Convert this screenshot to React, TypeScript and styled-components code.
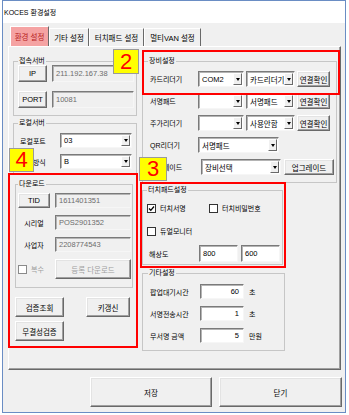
import React from "react";
import styled, { createGlobalStyle } from "styled-components";

const GlobalStyle = createGlobalStyle`
  html, body {
    margin: 0;
    padding: 0;
    background: #fff;
  }
  body {
    font-family: "Liberation Sans", "Noto Sans CJK KR", sans-serif;
    font-size: 7px;
    color: #000;
  }
  * {
    box-sizing: border-box;
  }
`;

const Page = styled.div`
  position: relative;
  width: 349px;
  height: 415px;
`;

const Window = styled.div`
  margin-left: 2px;
  width: 344px;
  height: 413px;
  border: 1px solid #6a8dc4;
  background: #f0f0f0;
  display: flex;
  flex-direction: column;
`;

const TitleBar = styled.div`
  height: 22px;
  background: #fff;
  display: flex;
  align-items: center;
  padding-left: 1px;
  font-size: 7px;
`;

const TabStrip = styled.div`
  display: flex;
  align-items: flex-end;
  height: 23px;
  padding-left: 7px;
`;

const Tab = styled.div<{ $w: number; $active?: boolean }>`
  width: ${(p) => p.$w}px;
  height: ${(p) => (p.$active ? 20 : 18)}px;
  display: flex;
  align-items: center;
  justify-content: center;
  border-style: solid;
  border-width: 1px 1px 0 1px;
  border-color: #fff #696969 transparent #fff;
  background: ${(p) => (p.$active ? "#f5a3a3" : "#f0f0f0")};
  color: ${(p) => (p.$active ? "#b71c1c" : "#000")};
  font-size: 7.5px;
  white-space: nowrap;
`;

const TabPanel = styled.div`
  margin-left: 5px;
  width: 333px;
  height: 324px;
  border: 1px solid;
  border-color: #fff #696969 #696969 #fff;
  box-shadow: inset -1px -1px 0 #a0a0a0;
  padding: 10px 3px 0 4px;
`;

const Columns = styled.div`
  display: grid;
  grid-template-columns: 124px 195px;
  column-gap: 5px;
  align-items: start;
`;

const Column = styled.div`
  display: flex;
  flex-direction: column;
`;

const Group = styled.fieldset<{ $mt?: number; $ml?: number; $w?: number; $pad: string }>`
  margin: ${(p) => p.$mt ?? 0}px 0 0 ${(p) => p.$ml ?? 0}px;
  width: ${(p) => (p.$w ? `${p.$w}px` : "auto")};
  min-width: 0;
  border: 1px solid #c6c6c6;
  padding: ${(p) => p.$pad};
`;

const Legend = styled.legend`
  padding: 0 1px;
  margin: 0;
  height: 8px;
  line-height: 8px;
  font-size: 7px;
`;

const Stack = styled.div<{ $gap: number }>`
  display: flex;
  flex-direction: column;
  gap: ${(p) => p.$gap}px;
`;

const GridRow = styled.div<{ $cols: string; $gap?: number; $h: number }>`
  display: grid;
  grid-template-columns: ${(p) => p.$cols};
  column-gap: ${(p) => p.$gap ?? 0}px;
  height: ${(p) => p.$h}px;
  align-items: center;
`;

const FlexRow = styled.div<{ $h: number; $gap?: number; $mt?: number }>`
  display: flex;
  align-items: center;
  height: ${(p) => p.$h}px;
  gap: ${(p) => p.$gap ?? 0}px;
  margin-top: ${(p) => p.$mt ?? 0}px;
`;

const Label = styled.div<{ $w?: number; $center?: boolean; $muted?: boolean }>`
  width: ${(p) => (p.$w ? `${p.$w}px` : "auto")};
  flex-shrink: 0;
  text-align: ${(p) => (p.$center ? "center" : "left")};
  padding-left: ${(p) => (p.$center ? 0 : 2)}px;
  white-space: nowrap;
  color: ${(p) => (p.$muted ? "#a0a0a0" : "#000")};
`;

const Btn = styled.button<{ $w?: number; $h: number; $disabled?: boolean }>`
  width: ${(p) => (p.$w ? `${p.$w}px` : "100%")};
  height: ${(p) => p.$h}px;
  flex-shrink: 0;
  margin: 0;
  padding: 0;
  font-family: inherit;
  font-size: 7.5px;
  color: ${(p) => (p.$disabled ? "#a0a0a0" : "#000")};
  background: #f0f0f0;
  border: 1px solid;
  border-color: #fff #696969 #696969 #fff;
  box-shadow: inset -1px -1px 0 #a0a0a0, inset 1px 1px 0 #e3e3e3;
  white-space: nowrap;
  cursor: default;
`;

const TextBox = styled.div<{ $w?: number; $h: number; $disabled?: boolean; $right?: boolean }>`
  width: ${(p) => (p.$w ? `${p.$w}px` : "100%")};
  height: ${(p) => p.$h}px;
  flex-shrink: 0;
  display: flex;
  align-items: center;
  justify-content: ${(p) => (p.$right ? "flex-end" : "flex-start")};
  padding: 0 4px 0 3px;
  font-size: 7.5px;
  background: ${(p) => (p.$disabled ? "#f0f0f0" : "#fff")};
  color: ${(p) => (p.$disabled ? "#6d6d6d" : "#000")};
  border: 1px solid;
  border-color: #7a7a7a #f6f6f6 #f6f6f6 #7a7a7a;
  box-shadow: inset 1px 1px 0 #b4b4b4;
`;

const Combo = styled.div<{ $w?: number; $h: number }>`
  width: ${(p) => (p.$w ? `${p.$w}px` : "100%")};
  height: ${(p) => p.$h}px;
  flex-shrink: 0;
  display: flex;
  align-items: stretch;
  background: #fff;
  border: 1px solid;
  border-color: #7a7a7a #f6f6f6 #f6f6f6 #7a7a7a;
  box-shadow: inset 1px 1px 0 #b4b4b4;
  padding: 1px;
`;

const ComboText = styled.div`
  flex: 1;
  display: flex;
  align-items: center;
  padding-left: 2px;
  font-size: 7.5px;
  white-space: nowrap;
  overflow: hidden;
`;

const ComboArrow = styled.div`
  width: 9px;
  display: flex;
  align-items: center;
  justify-content: center;
  background: #f0f0f0;
  border: 1px solid;
  border-color: #fff #696969 #696969 #fff;

  &::after {
    content: "";
    border-left: 2.5px solid transparent;
    border-right: 2.5px solid transparent;
    border-top: 3px solid #000;
  }
`;

const CheckItem = styled.div<{ $w?: number; $muted?: boolean }>`
  width: ${(p) => (p.$w ? `${p.$w}px` : "auto")};
  display: flex;
  align-items: center;
  gap: 4px;
  white-space: nowrap;
  color: ${(p) => (p.$muted ? "#a0a0a0" : "#000")};
`;

const CheckBox = styled.div<{ $muted?: boolean }>`
  width: 9px;
  height: 9px;
  flex-shrink: 0;
  border: 1px solid ${(p) => (p.$muted ? "#8a8a8a" : "#333")};
  background: #fff;
  display: flex;
  align-items: center;
  justify-content: center;
`;

const ButtonGrid = styled.div`
  display: grid;
  grid-template-columns: 49px 44px;
  grid-auto-rows: 20px;
  column-gap: 22px;
  row-gap: 4px;
  margin: 9px 0 0 2px;
`;

const Unit = styled.div`
  margin-left: 5px;
  white-space: nowrap;
`;

const ButtonBar = styled.div`
  display: flex;
  gap: 7px;
  margin: 7px 0 0 87px;
`;

const RedBox = styled.div<{ $x: number; $y: number; $w: number; $h: number }>`
  position: absolute;
  left: ${(p) => p.$x}px;
  top: ${(p) => p.$y}px;
  width: ${(p) => p.$w}px;
  height: ${(p) => p.$h}px;
  border: 2px solid #ff0000;
  pointer-events: none;
`;

const Badge = styled.div<{ $x: number; $y: number; $w: number; $h: number }>`
  position: absolute;
  left: ${(p) => p.$x}px;
  top: ${(p) => p.$y}px;
  width: ${(p) => p.$w}px;
  height: ${(p) => p.$h}px;
  background: #ffff00;
  border: 1px solid #9a9a9a;
  color: #ff0000;
  font-family: "Liberation Sans", sans-serif;
  font-size: 22px;
  line-height: 1;
  display: flex;
  align-items: center;
  justify-content: center;
`;

const Check = () => (
  <svg width="7" height="7" viewBox="0 0 7 7">
    <path d="M1 3.5 L2.8 5.3 L6 1.5" fill="none" stroke="#000" strokeWidth="1.3" />
  </svg>
);

const Select = ({ w, h, value }: { w?: number; h: number; value: string }) => (
  <Combo $w={w} $h={h}>
    <ComboText>{value}</ComboText>
    <ComboArrow />
  </Combo>
);

const devices = [
  { label: "카드리더기", port: "COM2", kind: "카드리더기" },
  { label: "서명패드", port: "", kind: "서명패드" },
  { label: "주가리더기", port: "", kind: "사용안함" },
];

const etc = [
  { label: "팝업대기시간", value: "60", unit: "초" },
  { label: "서명전송시간", value: "1", unit: "초" },
  { label: "무서명 금액", value: "5", unit: "만원" },
];

export default function App() {
  return (
    <Page>
      <GlobalStyle />
      <Window>
        <TitleBar>KOCES 환경설정</TitleBar>
        <TabStrip>
          <Tab $w={39} $active>환경 설정</Tab>
          <Tab $w={40}>기타 설정</Tab>
          <Tab $w={55}>터치패드 설정</Tab>
          <Tab $w={57}>멀티VAN 설정</Tab>
        </TabStrip>
        <TabPanel>
          <Columns>
            <Column>
              <Group $pad="0 2px 7px 4px">
                <Legend>접속서버</Legend>
                <Stack $gap={9}>
                  <GridRow $cols="29px 1fr" $gap={5} $h={17}>
                    <Btn $h={17}>IP</Btn>
                    <TextBox $h={17} $disabled>211.192.167.38</TextBox>
                  </GridRow>
                  <GridRow $cols="29px 1fr" $gap={5} $h={17}>
                    <Btn $h={17}>PORT</Btn>
                    <TextBox $h={17} $disabled>10081</TextBox>
                  </GridRow>
                </Stack>
              </Group>

              <Group $mt={3} $pad="6px 4px 5px 4px">
                <Legend>로컬서버</Legend>
                <Stack $gap={6}>
                  <GridRow $cols="42px 1fr" $h={15}>
                    <Label>로컬포트</Label>
                    <Select h={15} value="03" />
                  </GridRow>
                  <GridRow $cols="42px 1fr" $h={15}>
                    <Label>로컬방식</Label>
                    <Select h={15} value="B" />
                  </GridRow>
                </Stack>
              </Group>

              <Group $mt={5} $ml={2} $w={118} $pad="5px 1px 8px 2px">
                <Legend>다운로드</Legend>
                <Stack $gap={7}>
                  <GridRow $cols="32px 1fr" $gap={5} $h={15}>
                    <Btn $h={15}>TID</Btn>
                    <TextBox $h={15} $disabled>1611401351</TextBox>
                  </GridRow>
                  <GridRow $cols="32px 1fr" $gap={5} $h={15}>
                    <Label $center>시리얼</Label>
                    <TextBox $h={15} $disabled>POS2901352</TextBox>
                  </GridRow>
                  <GridRow $cols="32px 1fr" $gap={5} $h={15}>
                    <Label $center>사업자</Label>
                    <TextBox $h={15} $disabled>2208774543</TextBox>
                  </GridRow>
                  <GridRow $cols="32px 1fr" $gap={5} $h={20}>
                    <CheckItem $muted>
                      <CheckBox $muted />
                      복수
                    </CheckItem>
                    <Btn $h={20} $disabled>등록 다운로드</Btn>
                  </GridRow>
                </Stack>
              </Group>

              <ButtonGrid>
                <Btn $h={20}>검증조회</Btn>
                <Btn $h={20}>키갱신</Btn>
                <Btn $h={20}>무결성검증</Btn>
              </ButtonGrid>
            </Column>

            <Column>
              <Group $pad="6px 5px 7px 5px">
                <Legend>장비설정</Legend>
                <Stack $gap={6}>
                  {devices.map((d) => (
                    <FlexRow key={d.label} $h={16} $gap={2}>
                      <Label $w={48}>{d.label}</Label>
                      <Select w={46} h={16} value={d.port} />
                      <Select w={49} h={16} value={d.kind} />
                      <Btn $w={33} $h={16}>연결확인</Btn>
                    </FlexRow>
                  ))}
                  <FlexRow $h={16}>
                    <Label $w={50}>QR리더기</Label>
                    <Select w={81} h={16} value="서명패드" />
                  </FlexRow>
                  <FlexRow $h={16} $gap={3}>
                    <Label $w={50}>업그레이드</Label>
                    <Select w={80} h={16} value="장비선택" />
                    <Btn $w={50} $h={16}>업그레이드</Btn>
                  </FlexRow>
                </Stack>
              </Group>

              <Group $mt={3} $w={141} $pad="8px 3px 2px 4px">
                <Legend>터치패드설정</Legend>
                <FlexRow $h={12}>
                  <CheckItem $w={62}>
                    <CheckBox>
                      <Check />
                    </CheckBox>
                    터치서명
                  </CheckItem>
                  <CheckItem>
                    <CheckBox />
                    터치비밀번호
                  </CheckItem>
                </FlexRow>
                <FlexRow $h={12} $mt={11}>
                  <CheckItem>
                    <CheckBox />
                    듀얼모니터
                  </CheckItem>
                </FlexRow>
                <FlexRow $h={17} $mt={8} $gap={3}>
                  <Label $w={49}>해상도</Label>
                  <TextBox $w={39} $h={17}>800</TextBox>
                  <TextBox $w={39} $h={17}>600</TextBox>
                </FlexRow>
              </Group>

              <Group $mt={4} $w={143} $pad="7px 3px 7px 5px">
                <Legend>기타설정</Legend>
                <Stack $gap={7}>
                  {etc.map((e) => (
                    <FlexRow key={e.label} $h={15}>
                      <Label $w={52}>{e.label}</Label>
                      <TextBox $w={44} $h={15} $right>
                        {e.value}
                      </TextBox>
                      <Unit>{e.unit}</Unit>
                    </FlexRow>
                  ))}
                </Stack>
              </Group>
            </Column>
          </Columns>
        </TabPanel>
        <ButtonBar>
          <Btn $w={122} $h={30}>저장</Btn>
          <Btn $w={123} $h={30}>닫기</Btn>
        </ButtonBar>
      </Window>

      <RedBox $x={142} $y={50} $w={198} $h={45} />
      <Badge $x={113} $y={49} $w={26} $h={25}>2</Badge>
      <RedBox $x={140} $y={182} $w={146} $h={86} />
      <Badge $x={139} $y={157} $w={28} $h={24}>3</Badge>
      <RedBox $x={8} $y={173} $w={130} $h={175} />
      <Badge $x={9} $y={148} $w={25} $h={24}>4</Badge>
    </Page>
  );
}
